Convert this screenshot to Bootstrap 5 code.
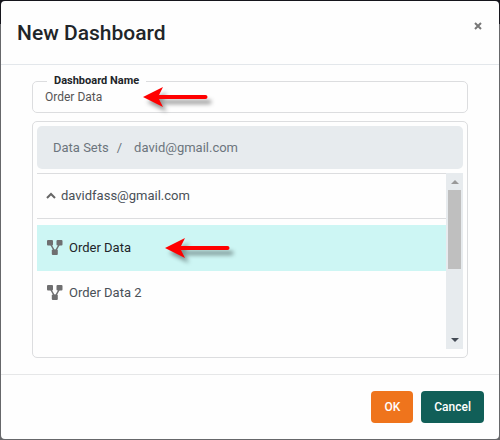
<!DOCTYPE html>
<html lang="en">
<head>
<meta charset="utf-8">
<meta name="viewport" content="width=device-width, initial-scale=1">
<title>New Dashboard</title>
<link rel="stylesheet" href="https://cdn.jsdelivr.net/npm/bootstrap@5.3.0/dist/css/bootstrap.min.css">
<style>
  body { font-family: Roboto, "Liberation Sans", sans-serif; font-size: 13px; line-height: 20px; color: #495057; background: linear-gradient(#15151c 24px, #66676a 24px); }
  .dialog-frame { padding: 1px; }
  .dialog-panel { border-radius: 4px; background: #fefefe; }
  .dialog-head { padding: 16px 12px 15px 16px; border-bottom: 1px solid #e3e7eb; }
  .dialog-title { font-size: 21px; line-height: 32px; font-weight: 500; color: #212529; }
  .dialog-close { border: 0; background: none; padding: 5px; line-height: 0; }
  .dialog-body { padding: 10px 31px 16px; }
  .outlined { border: 1px solid #dcdddf; border-radius: 5px; }
  .name-field { padding: 0 12px; height: 38px; }
  .name-field legend { float: none; width: auto; margin: 0 0 0 2px; padding: 0 7px; font-size: 11px; line-height: 12px; font-weight: 700; color: #212529; }
  .name-field input { display: block; border: 0; padding: 0; width: 100%; height: 20px; font-size: 12px; line-height: 20px; color: #555; background: none; outline: 0; }
  .set-box { margin-top: 8px; padding: 4px 4px 8px; }
  .path-bar { background: #e7ebee; border-radius: 5px; padding: 11px 16px; color: #6c757d; line-height: 21px; }
  .path-bar a { color: inherit; text-decoration: none; }
  .set-area { margin-top: 4px; min-height: 176px; }
  .group-btn { border: 0; border-top: 1px solid #dcdddf; border-bottom: 1px solid #dcdddf; background: none; padding: 12px 8px; text-align: left; color: #495057; line-height: 20px; margin-bottom: 6px; }
  .set-item { border: 0; background: none; text-align: left; padding: 13px 10px; color: #495057; gap: 6px; }
  .set-item + .set-item { padding-top: 12px; }
  .set-item.selected { background: #cdf6f4; color: #212529; }
  .scroll-track { width: 17px; background: #e7ebee; padding: 7px 0; }
  .scroll-thumb { width: 13px; height: 79px; margin-top: 6px; background: #bfbfbf; }
  .dialog-foot { border-top: 1px solid #e6e7e8; padding: 16px 15px; }
  .dialog-foot .btn { font-size: 12px; line-height: 20px; font-weight: 500; padding: 6px 13px; border: 0; border-radius: 4px; color: #fff; }
  .dialog-foot .btn-ok { background: #ef741c; }
  .dialog-foot .btn-dismiss { background: #115f58; }
  .pointer { position: absolute; pointer-events: none; overflow: visible; filter: drop-shadow(4px 5px 2px rgba(0,0,0,.4)); }
  .pointer-name { left: 110px; top: 0; }
  .pointer-set { left: 128px; top: 13px; }
</style>
<script src="https://cdn.jsdelivr.net/npm/bootstrap@5.3.0/dist/js/bootstrap.bundle.min.js"></script>
</head>
<body>
<svg class="d-none" aria-hidden="true">
  <symbol id="arrow" viewBox="0 0 66 20"><path d="M16 10H62.500" stroke="#f00" stroke-width="4" stroke-linecap="round"/><path d="M0 10L20 0L15 10L20 20Z" fill="#f00"/></symbol>
  <symbol id="nodes" viewBox="0 0 16 16"><path d="M3 3L8 12L13 3" fill="none" stroke="#6f6f70" stroke-width="1.500"/><g fill="#6f6f70"><rect x="0" y="0" width="6" height="5.500" rx="1"/><rect x="9.500" y="0" width="6" height="5.500" rx="1"/><rect x="4.800" y="9.500" width="6" height="5.500" rx="1"/></g></symbol>
</svg>
<main class="dialog-frame min-vh-100 d-flex" role="dialog" aria-labelledby="heading">
  <div class="dialog-panel flex-grow-1">
    <header class="dialog-head d-flex justify-content-between align-items-start">
      <h1 class="dialog-title m-0" id="heading">New Dashboard</h1>
      <button class="dialog-close" type="button" aria-label="Close">
        <svg width="8" height="8" viewBox="0 0 8 8"><path d="M1 1L7 7M7 1L1 7" stroke="#777" stroke-width="2"/></svg>
      </button>
    </header>
    <div class="dialog-body">
      <fieldset class="name-field outlined position-relative">
        <legend><label for="dash-name">Dashboard Name</label></legend>
        <input id="dash-name" type="text" value="Order Data">
        <svg class="pointer pointer-name" width="66" height="20" aria-hidden="true"><use href="#arrow"/></svg>
      </fieldset>
      <section class="set-box outlined">
        <nav class="path-bar d-flex gap-2" aria-label="Path"><a href="#">Data Sets</a><span>/</span><a href="#" class="ms-1">david@gmail.com</a></nav>
        <div class="set-area d-flex">
          <div class="flex-grow-1 d-flex flex-column">
            <button class="group-btn d-flex align-items-center" type="button" aria-expanded="true">
              <svg class="me-1" width="12" height="12" viewBox="0 0 12 12"><path d="M2 8L6 4L10 8" fill="none" stroke="#666" stroke-width="2"/></svg>davidfass@gmail.com
            </button>
            <button class="set-item selected d-flex align-items-center position-relative" type="button">
              <svg width="16" height="16" aria-hidden="true"><use href="#nodes"/></svg><span>Order Data</span>
              <svg class="pointer pointer-set" width="66" height="20" aria-hidden="true"><use href="#arrow"/></svg>
            </button>
            <button class="set-item d-flex align-items-center" type="button">
              <svg width="16" height="16" aria-hidden="true"><use href="#nodes"/></svg><span>Order Data 2</span>
            </button>
          </div>
          <div class="scroll-track d-flex flex-column align-items-center" aria-hidden="true">
            <svg width="8" height="4"><path d="M0 4L4 0L8 4Z" fill="#999"/></svg>
            <div class="scroll-thumb"></div>
            <svg class="mt-auto" width="8" height="4"><path d="M0 0L4 4L8 0Z" fill="#444b55"/></svg>
          </div>
        </div>
      </section>
    </div>
    <footer class="dialog-foot d-flex justify-content-end gap-2">
      <button class="btn btn-ok" type="button">OK</button>
      <button class="btn btn-dismiss" type="button">Cancel</button>
    </footer>
  </div>
</main>
</body>
</html>
